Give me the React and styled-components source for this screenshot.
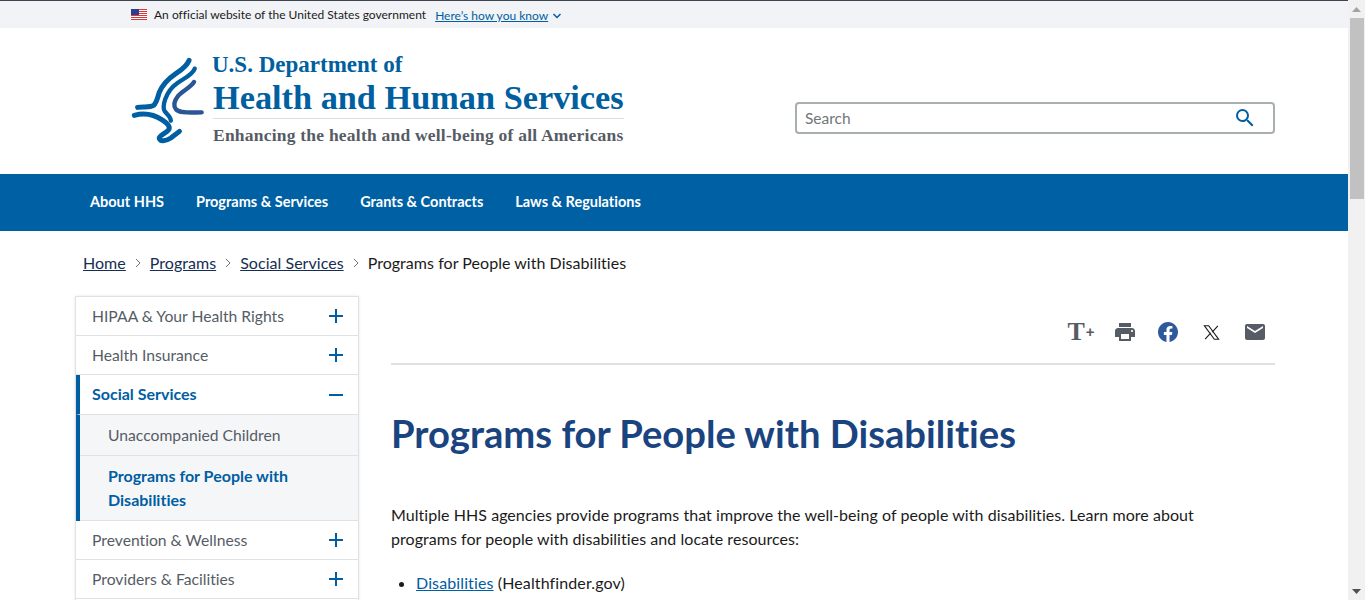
import React from 'react';
import styled, { createGlobalStyle } from 'styled-components';

const Global = createGlobalStyle`
  html, body { margin: 0; padding: 0; height: 600px; overflow: hidden; background: #fff; }
  body { font-family: "Lato", "Noto Sans", sans-serif; color: #1b1b1b; font-variant-ligatures: none; }
  * { box-sizing: border-box; }
`;
const Frame = styled.div`display: flex; width: 1365px; height: 600px; overflow: hidden;`;
const Page = styled.div`width: 1348px; flex: none; height: 600px; overflow: hidden;`;
const Scrollbar = styled.div`
  width: 17px; flex: none; background: #f1f1f1; display: flex; flex-direction: column; align-items: center;
  padding-top: 1px;
`;
const ScrollArrow = styled.div`
  height: 17px; width: 17px; display: flex; align-items: center; justify-content: center; flex: none;
`;
const ScrollThumb = styled.div`width: 14px; height: 181px; background: #c1c1c1; margin-left: 1px;`;
const ScrollSpace = styled.div`flex: 1;`;

const Banner = styled.div`
  height: 28px; background: #f1f3f6; border-top: 1px solid #3d4551;
  display: flex; align-items: center; padding-left: 131px; font-size: 12px; color: #1b1b1b;
`;
const BannerText = styled.span`margin-left: 7px; letter-spacing: .01px;`;
const BannerLink = styled.a`margin: 1px 0 0 9px; color: #005ea2; text-decoration: underline; display: inline-flex;`;
const HeaderBar = styled.header`
  height: 146px; display: flex; align-items: flex-start; justify-content: space-between;
  padding: 27px 73px 0 131px;
`;
const Logo = styled.div`display: flex; gap: 9px;`;
const LogoText = styled.div`display: flex; flex-direction: column; font-family: "Liberation Serif", serif; font-weight: 700; width: 411px; white-space: nowrap;`;
const LogoTop = styled.div`font-size: 23px; line-height: 22px; color: #00609f; margin: -1px 0 0 -1px;`;
const LogoMain = styled.div`font-size: 34.3px; line-height: 38px; color: #00609f; margin-top: 2px;`;
const LogoRule = styled.div`height: 1px; background: #dcdee0; margin-top: 2px;`;
const LogoTag = styled.div`font-size: 17.5px; line-height: 20px; color: #565c65; margin-top: 6px; letter-spacing: .22px;`;
const Search = styled.div`
  margin-top: 47px; width: 480px; height: 32px; border: 2px solid #a9aeb1; border-radius: 4px;
  display: flex; align-items: center; justify-content: space-between; padding: 0 16px 0 8px;
  font-size: 15.5px; color: #71767a;
`;
const Nav = styled.nav`height: 57px; background: #0060a4; display: flex; align-items: center; gap: 32px; padding: 0 0 2px 90px;`;
const NavItem = styled.a`color: #fff; font-weight: 700; font-size: 14.5px;`;
const Crumbs = styled.div`
  height: 65px; padding: 21px 0 0 83px; display: flex; align-items: flex-start; font-size: 16px; line-height: 22px; letter-spacing: .04px;
`;
const CrumbLink = styled.a`color: #162e51; text-decoration: underline;`;
const CrumbSep = styled.span`width: 24px; height: 22px; display: flex; align-items: center; justify-content: center;`;
const Body = styled.div`display: flex; padding: 0 73px 0 75px; gap: 32px;`;
const Side = styled.aside`
  width: 284px; flex: none; border: 1px solid #dfe1e2; border-bottom: 0; box-shadow: 0 0 3px rgba(0,0,0,.1); align-self: flex-start;
`;
const SideRow = styled.div`
  min-height: 39px; border-bottom: 1px solid #dfe1e2; display: flex; align-items: center; justify-content: space-between;
  padding: 0 14px 0 16px; font-size: 15.7px; color: #565c65;
  ${p => p.$active && `
    border-left: 4px solid #005ea2; padding-left: 12px; color: #005ea2; font-weight: 700; font-size: 16px; min-height: 40px;
  `}
`;
const SideLabel = styled.span`margin-top: ${p => (p.$active ? -2 : 0)}px;`;
const SubGroup = styled.div`border-left: 4px solid #005ea2; background: #f5f6f8;`;
const SubRow = styled.div`
  border-bottom: 1px solid #dfe1e2; padding: 8px 16px 8px 28px; line-height: 24px; font-size: 15.7px; color: #565c65;
  ${p => p.$active && `color: #005ea2; font-weight: 700; font-size: 16px;`}
`;
const Main = styled.main`flex: 1; min-width: 0;`;
const Tools = styled.div`
  height: 69px; border-bottom: 2px solid #dfe1e2; display: flex; align-items: flex-start; justify-content: flex-end;
  padding: 24px 0 0 0;
`;
const Tool = styled.span`
  width: 40px; margin-left: 3.5px; display: flex; justify-content: center; align-items: center; height: 24px;
`;
const TextSize = styled.span`
  font-family: "Liberation Serif", serif; font-weight: 700; font-size: 26px; color: #565c65; line-height: 24px; display: inline-flex; align-items: center;
`;
const Plus = styled.span`font-family: "Liberation Sans", sans-serif; font-size: 15px; margin-left: 1px;`;
const Title = styled.h1`
  margin: 46px 0 0; font-size: 38.2px; line-height: 44px; font-weight: 700; color: #1a4480;
`;
const Para = styled.p`margin: 48px 0 0; font-size: 16px; line-height: 24px; width: 830px; letter-spacing: .05px;`;
const Bullets = styled.ul`margin: 20px 0 0; padding-left: 25px; font-size: 16px; line-height: 24px; letter-spacing: .12px;`;
const BodyLink = styled.a`color: #005ea2; text-decoration: underline;`;

const FlagIcon = () => (
  <svg width="16" height="11" viewBox="0 0 16 11" aria-hidden="true">
    <rect width="16" height="11" fill="#fff" />
    {[0, 2, 4, 6, 8, 10].map(y => <rect key={y} y={y} width="16" height="1" fill="#d83933" />)}
    <rect width="8" height="6" fill="#2a3d8f" />
  </svg>
);
const Chevron = () => (
  <svg width="12" height="12" viewBox="0 0 24 24" style={{ marginLeft: 3, marginTop: 2 }} aria-hidden="true">
    <path d="M5 8l7 7 7-7" fill="none" stroke="#005ea2" strokeWidth="3" />
  </svg>
);
const CrumbChevron = () => (
  <svg width="6" height="10" viewBox="0 0 6 10" aria-hidden="true">
    <path d="M1 1l4 4-4 4" fill="none" stroke="#71767a" strokeWidth="1" />
  </svg>
);
const Eagle = () => (
  <svg width="73" height="88" viewBox="30 165 220 265" style={{ flex: 'none', marginTop: 1 }} aria-hidden="true">
    <g fill="none" strokeLinecap="round" strokeLinejoin="round">
      <path d="M205 178C200 192 185 205 165 218C140 235 125 250 115 275C110 290 108 305 98 314C85 322 65 316 50 320" stroke="#005ea2" strokeWidth="15" />
      <path d="M222 203C215 222 190 232 170 246C150 260 140 275 133 295C128 310 125 322 132 332C140 342 150 348 150 360" stroke="#005ea2" strokeWidth="13" />
      <path d="M220 243C210 260 185 270 172 285C160 300 158 315 165 325C175 338 205 335 243 335" stroke="#2a5696" strokeWidth="13" />
      <path d="M40 344C75 334 105 345 125 358C140 368 150 378 143 388C135 398 118 402 115 412C115 424 135 422 150 412L176 392" stroke="#005ea2" strokeWidth="15" />
    </g>
  </svg>
);
const Icon = ({ d, color, size = 24, vb = '0 0 24 24' }) => (
  <svg width={size} height={size} viewBox={vb} aria-hidden="true"><path d={d} fill={color} /></svg>
);
const XIcon = () => (
  <svg width="17" height="17" viewBox="0 0 24 24" aria-hidden="true">
    <path d="M2 2.5h6l14 19h-6zM21 2.5l-8 9M3 21.5l8-9" fill="none" stroke="#1b1b1b" strokeWidth="1.6" />
  </svg>
);
const PlusIcon = ({ minus }) => (
  <svg width="16" height="16" viewBox="0 0 16 16" aria-hidden="true">
    <path d={minus ? 'M1 8h14' : 'M1 8h14M8 1v14'} stroke="#005ea2" strokeWidth="2" fill="none" />
  </svg>
);

const sideTop = ['HIPAA & Your Health Rights', 'Health Insurance'];
const sideBottom = ['Prevention & Wellness', 'Providers & Facilities'];

export default function App() {
  return (
    <Frame>
      <Global />
      <Page>
        <Banner>
          <FlagIcon />
          <BannerText>An official website of the United States government</BannerText>
          <BannerLink>Here’s how you know</BannerLink>
          <Chevron />
        </Banner>
        <HeaderBar>
          <Logo>
            <Eagle />
            <LogoText>
              <LogoTop>U.S. Department of</LogoTop>
              <LogoMain>Health and Human Services</LogoMain>
              <LogoRule />
              <LogoTag>Enhancing the health and well-being of all Americans</LogoTag>
            </LogoText>
          </Logo>
          <Search>
            <span>Search</span>
            <Icon color="#005ea2" d="M15.5 14h-.79l-.28-.27A6.47 6.47 0 0 0 16 9.5 6.5 6.5 0 1 0 9.5 16c1.61 0 3.09-.59 4.23-1.57l.27.28v.79l5 4.99L20.49 19l-4.99-5zm-6 0C7.01 14 5 11.99 5 9.5S7.01 5 9.5 5 14 7.01 14 9.5 11.99 14 9.5 14z" />
          </Search>
        </HeaderBar>
        <Nav>
          <NavItem>About HHS</NavItem>
          <NavItem>Programs &amp; Services</NavItem>
          <NavItem>Grants &amp; Contracts</NavItem>
          <NavItem>Laws &amp; Regulations</NavItem>
        </Nav>
        <Crumbs>
          <CrumbLink>Home</CrumbLink><CrumbSep><CrumbChevron /></CrumbSep>
          <CrumbLink>Programs</CrumbLink><CrumbSep><CrumbChevron /></CrumbSep>
          <CrumbLink>Social Services</CrumbLink><CrumbSep><CrumbChevron /></CrumbSep>
          <span>Programs for People with Disabilities</span>
        </Crumbs>
        <Body>
          <Side>
            {sideTop.map(t => <SideRow key={t}><SideLabel>{t}</SideLabel><PlusIcon /></SideRow>)}
            <SideRow $active><SideLabel $active>Social Services</SideLabel><PlusIcon minus /></SideRow>
            <SubGroup>
              <SubRow>Unaccompanied Children</SubRow>
              <SubRow $active>Programs for People with Disabilities</SubRow>
            </SubGroup>
            {sideBottom.map(t => <SideRow key={t}><SideLabel>{t}</SideLabel><PlusIcon /></SideRow>)}
            <SideRow />
          </Side>
          <Main>
            <Tools>
              <Tool><TextSize>T<Plus>+</Plus></TextSize></Tool>
              <Tool><Icon color="#565c65" d="M19 8H5c-1.66 0-3 1.34-3 3v6h4v4h12v-4h4v-6c0-1.66-1.34-3-3-3zm-3 11H8v-5h8v5zm3-7c-.55 0-1-.45-1-1s.45-1 1-1 1 .45 1 1-.45 1-1 1zm-1-9H6v4h12V3z" /></Tool>
              <Tool><Icon color="#2e5a9c" d="M24 12.07C24 5.4 18.63 0 12 0S0 5.4 0 12.07c0 6.03 4.39 11.02 10.13 11.93v-8.44H7.08v-3.49h3.05V9.41c0-3.02 1.79-4.69 4.53-4.69 1.31 0 2.68.24 2.68.24v2.97h-1.51c-1.49 0-1.96.93-1.96 1.89v2.25h3.33l-.53 3.49h-2.8V24C19.61 23.09 24 18.1 24 12.07z" size={20} /></Tool>
              <Tool><XIcon /></Tool>
              <Tool><Icon color="#565c65" d="M20 4H4c-1.1 0-2 .9-2 2v12c0 1.1.9 2 2 2h16c1.1 0 2-.9 2-2V6c0-1.1-.9-2-2-2zm0 4l-8 5-8-5V6l8 5 8-5v2z" /></Tool>
            </Tools>
            <Title>Programs for People with Disabilities</Title>
            <Para>Multiple HHS agencies provide programs that improve the well-being of people with disabilities. Learn more about programs for people with disabilities and locate resources:</Para>
            <Bullets><li><BodyLink>Disabilities</BodyLink> (Healthfinder.gov)</li></Bullets>
          </Main>
        </Body>
      </Page>
      <Scrollbar>
        <ScrollArrow><svg width="9" height="5" viewBox="0 0 9 5"><path d="M0 5L4.5 0 9 5z" fill="#a3a3a3" /></svg></ScrollArrow>
        <ScrollThumb />
        <ScrollSpace />
        <ScrollArrow><svg width="9" height="5" viewBox="0 0 9 5"><path d="M0 0L4.5 5 9 0z" fill="#505050" /></svg></ScrollArrow>
      </Scrollbar>
    </Frame>
  );
}
